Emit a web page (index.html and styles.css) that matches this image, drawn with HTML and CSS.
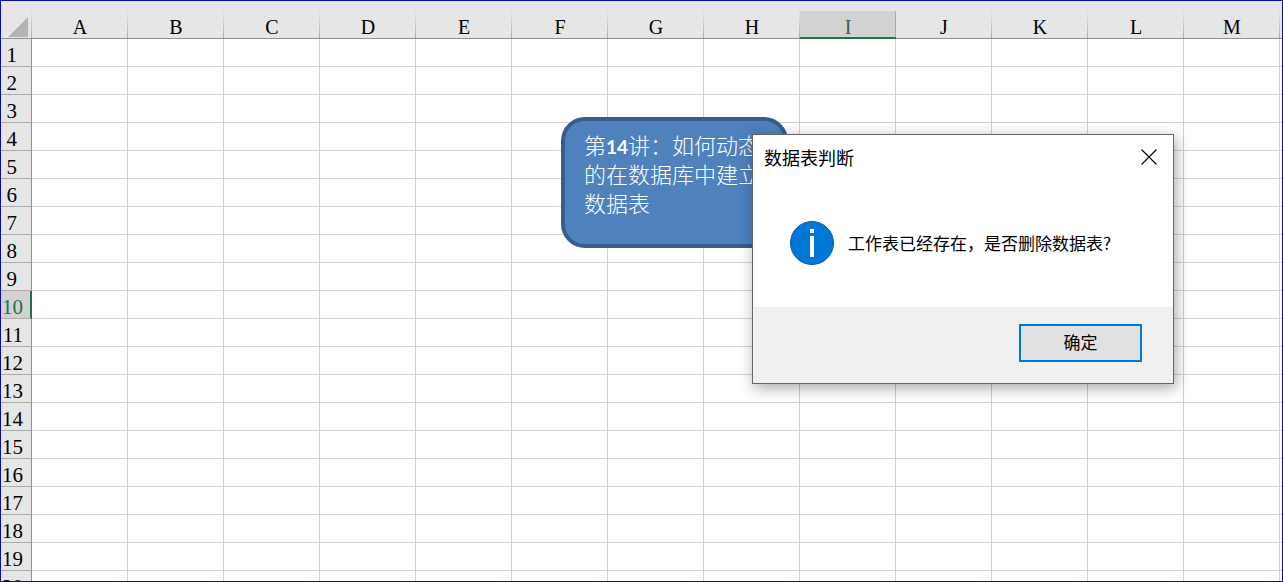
FILE: index.html
```html
<!DOCTYPE html>
<html lang="zh-CN">
<head>
<meta charset="utf-8">
<title>数据表判断</title>
<link rel="stylesheet" href="styles.css">
</head>
<body>
<main class="window">
  <table class="sheet">
    <colgroup><col class="col-rows"><col span="13" class="col-data"><col></colgroup>
    <thead><tr id="heads"><th class="corner"><svg width="20" height="20" viewBox="0 0 20 20" aria-hidden="true"><path d="M20 0V20H0Z" fill="#b3b3b3"/></svg></th></tr></thead>
    <tbody id="rows"></tbody>
  </table>
  <div class="shape">第<span class="shape-num">14</span>讲：如何动态的在数据库中建立数据表</div>
  <section class="dialog" role="dialog" aria-labelledby="dialog-title">
    <header class="dialog-head">
      <h1 class="dialog-title" id="dialog-title">数据表判断</h1>
      <button class="dialog-close" type="button" aria-label="关闭"><svg width="16" height="16" viewBox="0 0 16 16" aria-hidden="true"><path d="M.5.5l15 15M15.5.5l-15 15" stroke="#000" stroke-width="1.1"/></svg></button>
    </header>
    <div class="dialog-body">
      <svg width="44" height="44" viewBox="0 0 44 44" aria-hidden="true"><circle cx="22" cy="22" r="21.5" fill="#0078d7" stroke="#0a5699"/><path d="M20 8h4v4h-4zM20 15h4v21h-4z" fill="#fff"/></svg>
      <p class="dialog-text">工作表已经存在，是否删除数据表?</p>
    </div>
    <footer class="dialog-foot"><button class="ok" type="button">确定</button></footer>
  </section>
</main>
<script src="sheet.js"></script>
</body>
</html>
```
FILE: styles.css
```css
* { box-sizing: border-box; }
body { margin: 0; font-family: "Noto Sans CJK SC", sans-serif; }
.window {
  position: relative;
  height: 100vh;
  overflow: hidden;
  border: 1px solid #0c0ca8;
  background: #fff;
}
.sheet {
  width: 100%;
  table-layout: fixed;
  border-spacing: 0;
  font-family: "Liberation Serif", serif;
  font-size: 21px;
  line-height: 22px;
}
.col-rows { width: 31px; }
.col-data { width: 96px; }
.sheet th, .sheet td {
  height: 28px;
  padding: 0;
  border-right: 1px solid #d0d0d0;
  border-bottom: 1px solid #d0d0d0;
  font-weight: 400;
}
.sheet td:last-child { border-right: 0; }
.sheet thead th {
  height: 38px;
  padding-top: 15px;
  border-right: 0;
  border-bottom-color: #919191;
  background: linear-gradient(#e6e6e6, #ababab) right bottom / 1px 28px no-repeat, linear-gradient(#e5e5ee, #e6e6e6 10px);
  font-size: 20px;
  line-height: 20px;
}
.sheet thead th:last-child { background: #e6e6e6; }
.sheet thead .corner { padding: 14px 4px 0 0; }
.corner svg { display: block; margin-left: auto; }
.sheet thead .active {
  padding-top: 16px;
  border-bottom: 2px solid #217346;
  background: linear-gradient(#ababab, #ababab) right bottom / 1px 26px no-repeat, linear-gradient(#e5e5ee, #e6e6e6 10px, #d2d2d2 10px);
  color: #3b5c49;
}
.sheet tbody th {
  padding: 5px 8px 0 0;
  border-right-color: #919191;
  border-bottom-color: #ababab;
  background: #e6e6e6;
  text-align: right;
}
.sheet tbody .short { padding-right: 14px; }
.sheet tbody .active {
  padding-right: 7px;
  border-right: 2px solid #217346;
  background: #d2d2d2;
  color: #217346;
}
.shape {
  position: absolute;
  left: 560px;
  top: 116px;
  width: 227px;
  height: 131px;
  padding: 9px 4px 0 19px;
  border: 4px solid #385d8a;
  border-radius: 24px;
  background: #4f81bd;
  color: #fff;
  font-size: 22px;
  font-weight: 300;
  line-height: 29px;
}
.shape-num { font-family: Lato, sans-serif; font-size: 19px; font-weight: 700; line-height: 1; }
.dialog {
  position: absolute;
  left: 751px;
  top: 133px;
  width: 422px;
  border: 1px solid #666;
  background: #fff;
  box-shadow: 2px 4px 14px rgba(0, 0, 0, .35);
  color: #000;
}
.dialog-head {
  display: flex;
  align-items: center;
  justify-content: space-between;
  height: 44px;
  padding: 0 16px 1px 11px;
}
.dialog-title { margin: 0; font-size: 18px; font-weight: 400; line-height: 24px; }
.dialog-close { padding: 0; border: 0; background: none; }
.dialog-close svg { display: block; }
.dialog-body {
  display: flex;
  align-items: center;
  gap: 14px;
  height: 128px;
  padding: 0 37px;
}
.dialog-text { margin: 0; font-size: 17px; font-weight: 400; line-height: 24px; white-space: nowrap; }
.dialog-foot {
  display: flex;
  justify-content: flex-end;
  padding: 17px 31px 21px;
  background: #f0f0f0;
}
.ok {
  width: 123px;
  height: 38px;
  padding: 0 0 3px;
  border: 2px solid #0078d7;
  background: #e1e1e1;
  color: #000;
  font-family: inherit;
  font-size: 17px;
  font-weight: 400;
}
```
FILE: sheet.js
```js
const columns = [..."ABCDEFGHIJKLM", ""];
const activeColumn = "I";
const activeRow = 10;
const rowCount = 20;

const heads = document.getElementById("heads");
for (const name of columns) {
  const th = document.createElement("th");
  th.scope = "col";
  th.textContent = name;
  if (name === activeColumn) th.className = "active";
  heads.append(th);
}

const rows = document.getElementById("rows");
for (let n = 1; n <= rowCount; n++) {
  const tr = rows.insertRow();
  const th = document.createElement("th");
  th.scope = "row";
  th.textContent = n;
  if (n < 10) th.className = "short";
  if (n === activeRow) th.className = "active";
  tr.append(th);
  for (const _ of columns) tr.insertCell();
}
```
